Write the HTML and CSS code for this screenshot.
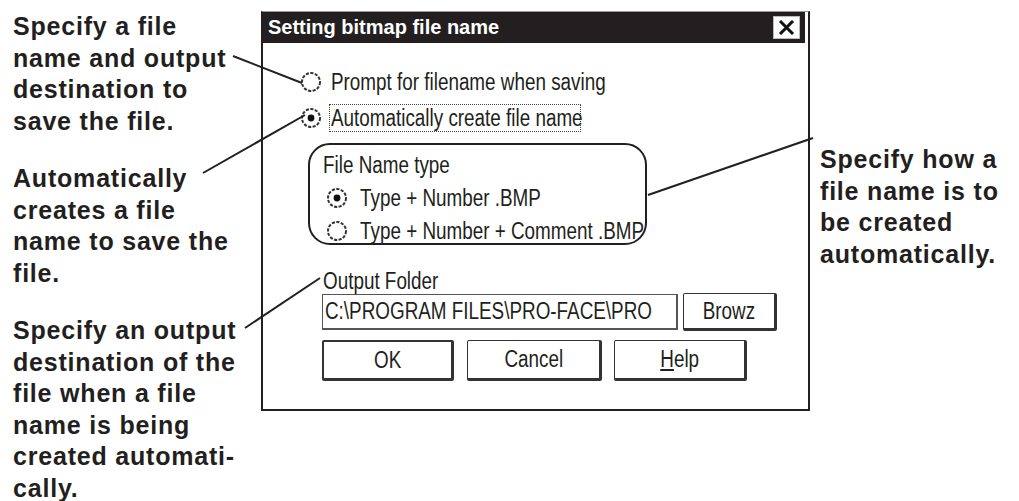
FILE: index.html
```html
<!DOCTYPE html>
<html lang="en">
<head>
  <meta charset="UTF-8" />
  <title>Setting bitmap file name</title>
  <link rel="stylesheet" href="styles.css">
</head>
<body>
  <div class="page">
    <div class="notes notes-left">
      <p>Specify a file<br>name and output<br>destination to<br>save the file.</p>
      <p>Automatically<br>creates a file<br>name to save the<br>file.</p>
      <p>Specify an output<br>destination of the<br>file when a file<br>name is being<br>created automati-<br>cally.</p>
    </div>

    <div class="dialog">
      <div class="titlebar">
        <span class="title">Setting bitmap file name</span>
        <span class="close">
          <svg width="17" height="15" viewBox="0 0 17 15"><path d="M2 1 L15 14 M15 1 L2 14" stroke="#111" stroke-width="3"/></svg>
        </span>
      </div>

      <div class="dialog-body">
        <div class="radio-row">
          <svg class="radio" width="22" height="22" viewBox="0 0 22 22"><circle cx="11" cy="11" r="9" fill="none" stroke="#333" stroke-width="2" stroke-dasharray="3.2 1.4"/></svg>
          <span class="radio-text"><span class="cond">Prompt for filename when saving</span></span>
        </div>
        <div class="radio-row second">
          <svg class="radio" width="22" height="22" viewBox="0 0 22 22"><circle cx="11" cy="11" r="9" fill="none" stroke="#333" stroke-width="2" stroke-dasharray="3.2 1.4"/><circle cx="11" cy="11" r="3.4" fill="#111"/></svg>
          <span class="radio-text focus"><span class="cond">Automatically create file name</span></span>
        </div>

        <div class="group">
          <div class="group-title"><span class="cond">File Name type</span></div>
          <div class="radio-row small">
            <svg class="radio" width="22" height="22" viewBox="0 0 22 22"><circle cx="11" cy="11" r="9" fill="none" stroke="#333" stroke-width="2" stroke-dasharray="3.2 1.4"/><circle cx="11" cy="11" r="3.4" fill="#111"/></svg>
            <span class="cond">Type + Number .BMP</span>
          </div>
          <div class="radio-row small">
            <svg class="radio" width="22" height="22" viewBox="0 0 22 22"><circle cx="11" cy="11" r="9" fill="none" stroke="#333" stroke-width="2" stroke-dasharray="3.2 1.4"/></svg>
            <span class="cond">Type + Number + Comment .BMP</span>
          </div>
        </div>

        <div class="field-label"><span class="cond">Output Folder</span></div>
        <div class="field-row">
          <div class="input"><span class="cond">C:\PROGRAM FILES\PRO-FACE\PRO</span></div>
          <div class="btn browse"><span class="cond mid">Browz</span></div>
        </div>

        <div class="buttons">
          <div class="btn btn-default ok"><span class="cond mid">OK</span></div>
          <div class="btn cancel"><span class="cond mid">Cancel</span></div>
          <div class="btn help"><span class="cond mid"><u>H</u>elp</span></div>
        </div>
      </div>
    </div>

    <div class="notes notes-right">
      <p>Specify how a<br>file name is to<br>be created<br>automatically.</p>
    </div>

    <svg class="leaders" width="1019" height="501" viewBox="0 0 1019 501">
      <path d="M233 56 L302 83" />
      <path d="M203 173 L305 115" />
      <path d="M245 328 L320 278" />
      <path d="M648 195 L813 138" />
    </svg>
  </div>
</body>
</html>
```

FILE: styles.css
```css
html, body {
  margin: 0;
  padding: 0;
  background: #fff;
  color: #231f20;
}

.page {
  position: relative;
  display: flex;
  width: 1019px;
  height: 501px;
  overflow: hidden;
}

.notes {
  font-family: "Liberation Sans", Arial, sans-serif;
  font-weight: bold;
  font-size: 25px;
  line-height: 31.5px;
  letter-spacing: 0.8px;
}

.notes p {
  margin: 0 0 26px 0;
}

.notes-left {
  width: 248px;
  padding: 11px 0 0 13px;
}

.notes-right {
  padding: 144px 0 0 10px;
}

/* dialog */

.dialog {
  box-sizing: border-box;
  width: 549px;
  height: 400px;
  margin-top: 11px;
  border: 2px solid #231f20;
  border-top: 1px solid #999;
  font-family: "Liberation Sans", Arial, sans-serif;
  font-size: 23px;
  color: #231f20;
}

/* the dialog font is a tall, narrow system face */
.cond {
  display: inline-block;
  white-space: nowrap;
  transform: scaleX(0.82);
  transform-origin: 0 50%;
}

.cond.mid {
  transform-origin: 50% 50%;
}

.titlebar {
  display: flex;
  align-items: center;
  justify-content: space-between;
  height: 31px;
  margin-right: 3px;
  padding: 0 5px;
  background: #231f20;
}

.title {
  font-weight: bold;
  font-size: 20px;
  color: #fff;
}

.close {
  display: flex;
  align-items: center;
  justify-content: center;
  width: 25px;
  height: 21px;
  background: #fff;
  border: 1px solid #bbb;
}

.dialog-body {
  padding: 25px 0 0 37px;
}

.radio-row {
  display: flex;
  align-items: center;
  height: 28px;
  gap: 7px;
}

.radio-row.second {
  margin-top: 8px;
}

.radio {
  flex: none;
}

.radio-text {
  box-sizing: border-box;
  height: 28px;
  width: 252px;
  line-height: 26px;
  padding: 0 0 0 1px;
  border: 1px solid transparent;
  white-space: nowrap;
}

.radio-text.focus {
  border: 1px dotted #444;
}

.group {
  box-sizing: border-box;
  width: 339px;
  height: 102px;
  margin: 11px 0 0 8px;
  padding: 9px 0 0 13px;
  border: 2px solid #231f20;
  border-radius: 22px;
}

.group-title {
  line-height: 22px;
}

.radio-row.small {
  height: 22px;
  margin-top: 11px;
  padding-left: 3px;
  gap: 12px;
}

.field-label {
  margin: 25px 0 0 23px;
  line-height: 22px;
}

.field-row {
  display: flex;
  align-items: center;
  gap: 5px;
  margin: 1px 0 0 22px;
}

.input {
  box-sizing: border-box;
  width: 356px;
  height: 36px;
  line-height: 32px;
  padding-left: 2px;
  border: 1px solid #555;
  border-right-width: 2px;
  border-bottom-width: 2px;
  white-space: nowrap;
  overflow: hidden;
}

.btn {
  box-sizing: border-box;
  display: flex;
  align-items: center;
  justify-content: center;
  border: 1.5px solid #333;
  border-right-width: 3px;
  border-bottom-width: 3px;
  border-radius: 2px;
}

.browse {
  width: 94px;
  height: 38px;
}

.buttons {
  display: flex;
  margin: 9px 0 0 22px;
}

.buttons .btn {
  height: 41px;
}

.ok {
  width: 132px;
}

.btn-default {
  border-width: 2px 3px 3px 2px;
}

.cancel {
  width: 135px;
  margin-left: 13px;
}

.help {
  width: 133px;
  margin-left: 12px;
}

.leaders {
  position: absolute;
  left: 0;
  top: 0;
  pointer-events: none;
}

.leaders path {
  stroke: #231f20;
  stroke-width: 2;
  fill: none;
}
```
